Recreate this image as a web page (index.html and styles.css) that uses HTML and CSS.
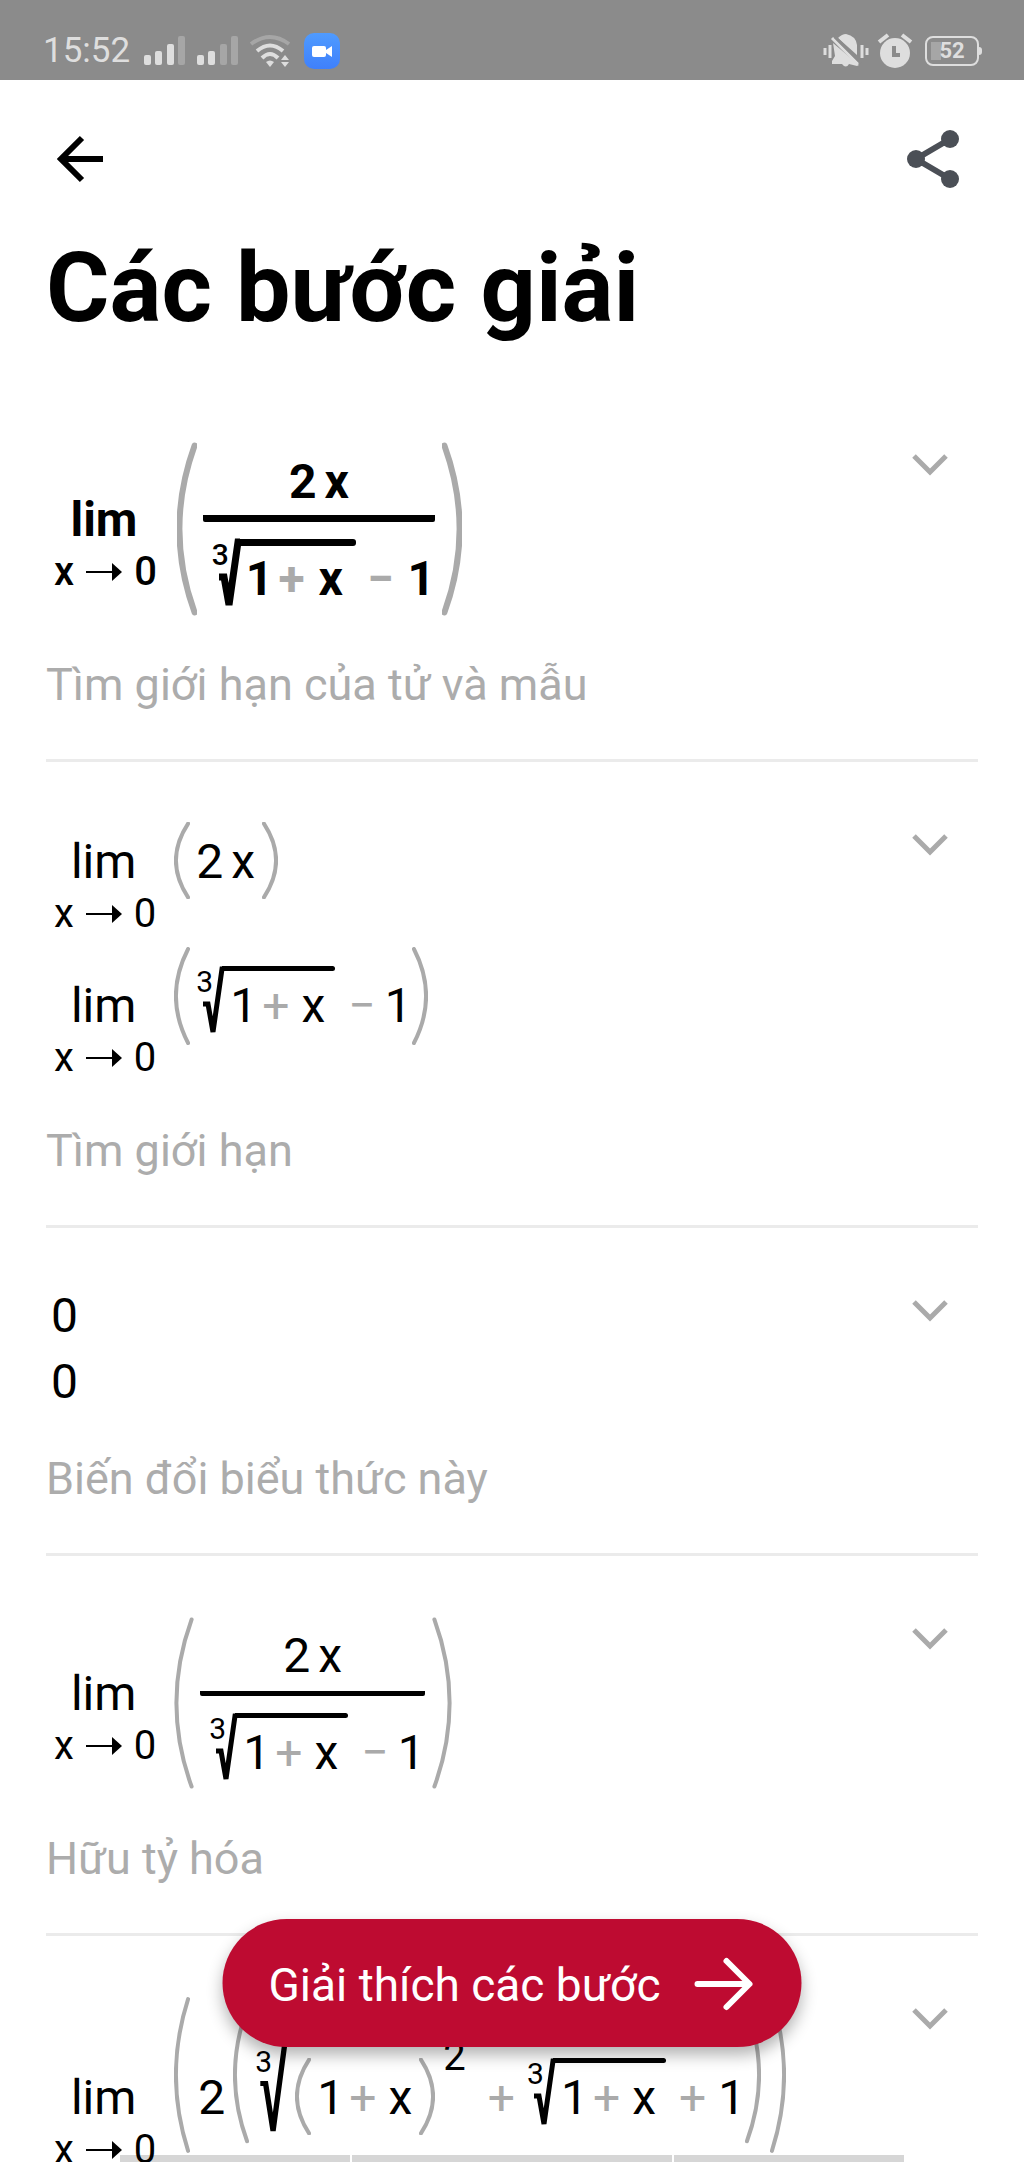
FILE: index.html
```html
<!DOCTYPE html>
<html lang="vi">
<head>
<meta charset="utf-8">
<meta name="viewport" content="width=device-width, initial-scale=1">
<title>Các bước giải</title>
<link rel="stylesheet" href="styles.css">
</head>
<body>
<svg class="defs" aria-hidden="true">
  <symbol id="open" viewBox="0 0 100 100" preserveAspectRatio="none"><path vector-effect="non-scaling-stroke" d="M88 2Q-64 50 88 98"/></symbol>
  <symbol id="close" viewBox="0 0 100 100" preserveAspectRatio="none"><path vector-effect="non-scaling-stroke" d="M12 2Q164 50 12 98"/></symbol>
  <symbol id="to" viewBox="0 0 36 22"><path d="M0 11h28" stroke="currentColor" stroke-width="2"/><path d="M26 2l10 9-10 9z" fill="currentColor"/></symbol>
  <symbol id="down" viewBox="0 0 36 24"><path d="M2 3l16 16 16-16" fill="none" stroke="currentColor" stroke-width="5"/></symbol>
</svg>
<div class="app">
  <div class="status">
    <span class="status-left">
      <span class="clock">15:52</span>
      <svg width="42" height="30" viewBox="0 0 42 30" fill="#dedede"><rect x="0" y="19" width="7" height="10" rx="2"/><rect x="11" y="15" width="7" height="14" rx="2"/><rect x="23" y="8" width="7" height="21" rx="2"/><rect x="34" y="0" width="7" height="29" rx="2" fill="#a6a6a6"/></svg>
      <svg width="42" height="30" viewBox="0 0 42 30" fill="#dedede"><rect x="0" y="19" width="7" height="10" rx="2"/><rect x="11" y="15" width="7" height="14" rx="2"/><rect x="23" y="8" width="7" height="21" rx="2" fill="#a6a6a6"/><rect x="34" y="0" width="7" height="29" rx="2" fill="#a6a6a6"/></svg>
      <svg width="40" height="32" viewBox="0 0 40 32" fill="none" stroke="#dedede" stroke-width="4"><path d="M1 9Q20-5 39 9" stroke="#a6a6a6"/><path d="M7 16Q20 5 33 16"/><path d="M12 23Q20 15 28 23"/><path d="M16 27q4-3 8 0l-4 5z" fill="#dedede" stroke="none"/><path d="M31 25l4-5 4 5zM31 27l4 5 4-5z" fill="#dedede" stroke="none"/></svg>
      <svg class="cam" width="36" height="36" viewBox="0 0 36 36"><defs><linearGradient id="cam" x2="0" y2="1"><stop stop-color="#4f9bff"/><stop offset="1" stop-color="#3f80fb"/></linearGradient></defs><rect width="36" height="36" rx="10" fill="url(#cam)"/><rect x="8" y="13" width="14" height="11" rx="2" fill="#fff"/><path d="M22 17l6-4v11l-6-4z" fill="#fff"/></svg>
    </span>
    <span class="status-right">
      <svg width="46" height="34" viewBox="0 0 46 34" fill="#dedede"><path d="M15 4Q19 0 23 0q10 2 11 11v10zM10 9l26 22-2 1-8-2q-3 5-7 0H9v-3l3-5z"/><path d="M9 4l26 26" stroke="#dedede" stroke-width="3"/><path d="M12 3l26 26" stroke="#8b8b8b" stroke-width="3"/><path d="M2 14v7M7 11v13M39 11v13M44 14v7" stroke="#dedede" stroke-width="3"/></svg>
      <svg width="36" height="34" viewBox="0 0 36 34"><circle cx="18" cy="19" r="15" fill="#dedede"/><path d="M2 8l9-7M34 8l-9-7" stroke="#dedede" stroke-width="4"/><path d="M17 12v9h6" fill="none" stroke="#8b8b8b" stroke-width="4"/></svg>
      <span class="battery">52</span>
    </span>
  </div>
  <header class="bar">
    <button class="icon" type="button" aria-label="Quay lại"><svg width="48" height="48" viewBox="0 0 48 48" fill="none" stroke="#000" stroke-width="6"><path d="M47 24H6M26 3L5 24l21 21"/></svg></button>
    <button class="icon" type="button" aria-label="Chia sẻ"><svg width="52" height="58" viewBox="0 0 52 58" fill="#4b4f56"><path d="M43 9L9 29l34 20" fill="none" stroke="#4b4f56" stroke-width="6"/><circle cx="9" cy="29" r="9"/><circle cx="43" cy="9" r="9"/><circle cx="43" cy="49" r="9"/></svg></button>
  </header>
  <main class="steps">
    <h1>Các bước giải</h1>

    <section class="step">
      <div class="work">
        <div class="formula has-frac strong">
          <div class="lim"><span class="name">lim</span><span class="sub">x<svg class="to"><use href="#to"/></svg>0</span></div>
          <div class="group">
            <span class="paren wide"><svg><use href="#open"/></svg></span>
            <div class="in"><div class="frac"><div class="num"><span>2</span><span class="var">x</span></div><div class="den"><div class="root"><span class="sign"><i>3</i><svg viewBox="0 0 28 70" preserveAspectRatio="none"><path d="M7 38h5l5 28 9-63h2"/></svg></span><div class="radicand"><span>1</span><span class="op">+</span><span class="var">x</span></div></div><span class="op minus">−</span><span>1</span></div></div></div>
            <span class="paren wide"><svg><use href="#close"/></svg></span>
          </div>
        </div>
        <p>Tìm giới hạn của tử và mẫu</p>
      </div>
      <button class="more" type="button" aria-label="Mở bước"><svg><use href="#down"/></svg></button>
    </section>

    <section class="step">
      <div class="work">
        <div class="formula">
          <div class="lim"><span class="name">lim</span><span class="sub">x<svg class="to"><use href="#to"/></svg>0</span></div>
          <div class="group">
            <span class="paren"><svg><use href="#open"/></svg></span>
            <div class="in"><span class="coef">2</span><span class="var">x</span></div>
            <span class="paren"><svg><use href="#close"/></svg></span>
          </div>
        </div>
        <div class="formula">
          <div class="lim"><span class="name">lim</span><span class="sub">x<svg class="to"><use href="#to"/></svg>0</span></div>
          <div class="group">
            <span class="paren"><svg><use href="#open"/></svg></span>
            <div class="in"><div class="root"><span class="sign"><i>3</i><svg viewBox="0 0 28 70" preserveAspectRatio="none"><path d="M7 38h5l5 28 9-63h2"/></svg></span><div class="radicand"><span>1</span><span class="op">+</span><span class="var">x</span></div></div><span class="op minus">−</span><span>1</span></div>
            <span class="paren"><svg><use href="#close"/></svg></span>
          </div>
        </div>
        <p>Tìm giới hạn</p>
      </div>
      <button class="more" type="button" aria-label="Mở bước"><svg><use href="#down"/></svg></button>
    </section>

    <section class="step">
      <div class="work">
        <div class="formula value">0</div>
        <div class="formula value">0</div>
        <p>Biến đổi biểu thức này</p>
      </div>
      <button class="more" type="button" aria-label="Mở bước"><svg><use href="#down"/></svg></button>
    </section>

    <section class="step">
      <div class="work">
        <div class="formula has-frac">
          <div class="lim"><span class="name">lim</span><span class="sub">x<svg class="to"><use href="#to"/></svg>0</span></div>
          <div class="group">
            <span class="paren wide"><svg><use href="#open"/></svg></span>
            <div class="in"><div class="frac"><div class="num"><span>2</span><span class="var">x</span></div><div class="den"><div class="root"><span class="sign"><i>3</i><svg viewBox="0 0 28 70" preserveAspectRatio="none"><path d="M7 38h5l5 28 9-63h2"/></svg></span><div class="radicand"><span>1</span><span class="op">+</span><span class="var">x</span></div></div><span class="op minus">−</span><span>1</span></div></div></div>
            <span class="paren wide"><svg><use href="#close"/></svg></span>
          </div>
        </div>
        <p>Hữu tỷ hóa</p>
      </div>
      <button class="more" type="button" aria-label="Mở bước"><svg><use href="#down"/></svg></button>
    </section>

    <section class="step">
      <div class="work">
        <div class="formula">
          <div class="lim"><span class="name">lim</span><span class="sub">x<svg class="to"><use href="#to"/></svg>0</span></div>
          <div class="group">
            <span class="paren"><svg><use href="#open"/></svg></span>
            <div class="in outer"><span class="coef">2</span>
              <div class="group">
                <span class="paren"><svg><use href="#open"/></svg></span>
                <div class="in">
                  <div class="root tall"><span class="sign"><i>3</i><svg viewBox="0 0 32 109" preserveAspectRatio="none"><path d="M5 58h5l7 47L30 3h2"/></svg></span><div class="radicand">
                    <div class="group">
                      <span class="paren"><svg><use href="#open"/></svg></span>
                      <div class="in"><span>1</span><span class="op">+</span><span class="var">x</span></div>
                      <span class="paren"><svg><use href="#close"/></svg></span>
                    </div><sup>2</sup></div></div>
                  <span class="op">+</span>
                  <div class="root"><span class="sign"><i>3</i><svg viewBox="0 0 28 70" preserveAspectRatio="none"><path d="M7 38h5l5 28 9-63h2"/></svg></span><div class="radicand"><span>1</span><span class="op">+</span><span class="var">x</span></div></div>
                  <span class="op">+</span><span>1</span>
                </div>
                <span class="paren"><svg><use href="#close"/></svg></span>
              </div>
            </div>
            <span class="paren"><svg><use href="#close"/></svg></span>
          </div>
        </div>
      </div>
      <button class="more" type="button" aria-label="Mở bước"><svg><use href="#down"/></svg></button>
    </section>
  </main>
  <div class="tabs"><span></span><span></span><span></span></div>
  <button class="explain" type="button">Giải thích các bước<svg width="58" height="54" viewBox="0 0 58 54" fill="none" stroke="#fff" stroke-width="6" stroke-linecap="round" stroke-linejoin="round"><path d="M3 26h51M32 3l23 23-23 23"/></svg></button>
</div>
</body>
</html>
```
FILE: styles.css
```css
* { box-sizing: border-box; }
body { margin: 0; background: #fff; color: #000; font-family: Roboto, "Noto Sans", sans-serif; }
button { padding: 0; border: 0; background: none; font: inherit; cursor: pointer; }
svg { display: block; flex: none; overflow: visible; }
.defs { position: absolute; width: 0; height: 0; }

.app { position: relative; display: flex; flex-direction: column; height: 100vh; overflow: hidden; }

.status { display: flex; flex: none; justify-content: space-between; height: 80px; padding: 20px 45px 0 43px; background: #8b8b8b; color: #dedede; }
.status-left, .status-right { display: flex; align-items: center; height: 62px; }
.status-left { gap: 11px; }
.status-right { gap: 8px; }
.clock { margin-right: 3px; font-size: 35px; line-height: 40px; }
.cam { margin-left: 3px; }
.battery { position: relative; width: 54px; height: 30px; margin-left: 4px; border: 2px solid #dedede; border-radius: 8px; background: linear-gradient(#a6a6a6, #a6a6a6) 4px 4px / 10px 18px no-repeat; font-size: 22px; font-weight: 700; line-height: 26px; text-align: center; }
.battery::after { content: ""; position: absolute; top: 9px; right: -5px; width: 3px; height: 8px; border-radius: 0 3px 3px 0; background: #dedede; }

.bar { display: flex; flex: none; align-items: center; justify-content: space-between; padding: 50px 65px 0 56px; }
.steps { flex: 1; min-height: 0; padding: 0 46px; overflow: hidden; }
h1 { margin: 44px 0 38px; font-size: 97px; line-height: 112px; font-weight: 700; }

.step { display: flex; align-items: flex-start; justify-content: space-between; padding: 60px 0 46px; border-bottom: 3px solid #ebebeb; }
.more { display: flex; align-items: center; justify-content: center; width: 48px; height: 46px; margin-right: 24px; color: #aaa; }
.more svg { width: 36px; height: 24px; }
.step p { margin: 41px 0 0; color: #acacac; font-size: 45px; line-height: 56px; }

.formula { display: flex; align-items: baseline; gap: 18px; padding-left: 8px; font-size: 48px; line-height: 56px; }
.formula + .formula { margin-top: 9px; }
.value { padding-left: 5px; }
.value + .value { margin-top: 10px; }
.lim { display: flex; flex-direction: column; align-items: center; }
.name { padding-right: 3px; }
.has-frac .lim { align-self: flex-start; margin-top: 50px; }
.sub { display: flex; align-items: center; gap: 12px; font-size: 40px; line-height: 48px; }
.to { width: 36px; height: 22px; }

.group { display: flex; align-items: baseline; }
.paren { position: relative; align-self: stretch; width: 16px; color: #aaa; }
.paren svg { position: absolute; inset: 0; width: 100%; height: 100%; fill: none; stroke: currentColor; stroke-width: 4; stroke-linecap: round; }
.paren.wide { width: 20px; }
.in { display: flex; align-items: baseline; padding: 12px 0 9px 6px; }
.in.outer { padding: 10px 9px 10px 8px; }
.has-frac .in { padding-bottom: 7px; }
.coef { margin-right: 8px; }
.var { margin-right: 7px; }
.op { margin: 0 12px 0 5px; color: #aaa; }
.root + .op { margin-left: 13px; }
.root + .minus { margin-right: 9px; }

.root { display: flex; align-items: baseline; margin-top: 7px; }
.sign { position: relative; align-self: stretch; width: 28px; }
.sign svg { position: absolute; inset: 0; width: 100%; height: 100%; fill: none; stroke: #000; stroke-width: 5; }
.sign i { position: absolute; top: 0; left: 0; font-size: 30px; font-style: normal; line-height: 32px; }
.radicand { position: relative; display: flex; align-items: baseline; padding: 12px 3px 2px 6px; }
.radicand::before { content: ""; position: absolute; top: 0; left: -2px; right: 0; height: 5px; border-radius: 0 3px 3px 0; background: #000; }
.tall .sign { width: 34px; }
.tall .sign i { top: auto; bottom: 57px; }
.tall .radicand { padding-bottom: 0; }
.tall .group { margin-top: 21px; }
sup { align-self: flex-start; padding: 0 6px 0 8px; font-size: 40px; line-height: 40px; }

.frac { margin-right: 7px; }
.num { display: flex; justify-content: center; gap: 8px; padding-bottom: 7px; border-bottom: 5px solid #000; border-radius: 2px; }
.num .var { margin-right: 0; }
.den { display: flex; align-items: baseline; padding: 10px 0 0 9px; }

.strong { gap: 20px; font-weight: 700; }
.strong .sub, .strong .sign i { font-weight: 500; }
.strong .paren svg { stroke-width: 6; }
.strong .op { margin-right: 14px; }
.strong .root + .op { margin-left: 11px; margin-right: 14px; }
.strong .num { padding-bottom: 5px; border-bottom-width: 7px; }
.strong .sign svg { stroke-width: 7; }
.strong .radicand { padding-right: 6px; }
.strong .radicand::before { height: 7px; }

.tabs { position: absolute; bottom: 0; left: 120px; right: 120px; display: grid; grid-template-columns: 230fr 320fr 230fr; gap: 2px; height: 7px; }
.tabs span { background: rgba(0, 0, 0, .16); }
.explain { position: absolute; bottom: 115px; left: 50%; transform: translateX(-50%); display: flex; align-items: center; gap: 34px; height: 128px; padding: 4px 49px 0 46px; border-radius: 64px; background: #be0b31; color: #fff; font-size: 46px; line-height: 56px; white-space: nowrap; box-shadow: 0 8px 16px rgba(0, 0, 0, .3); }
```
